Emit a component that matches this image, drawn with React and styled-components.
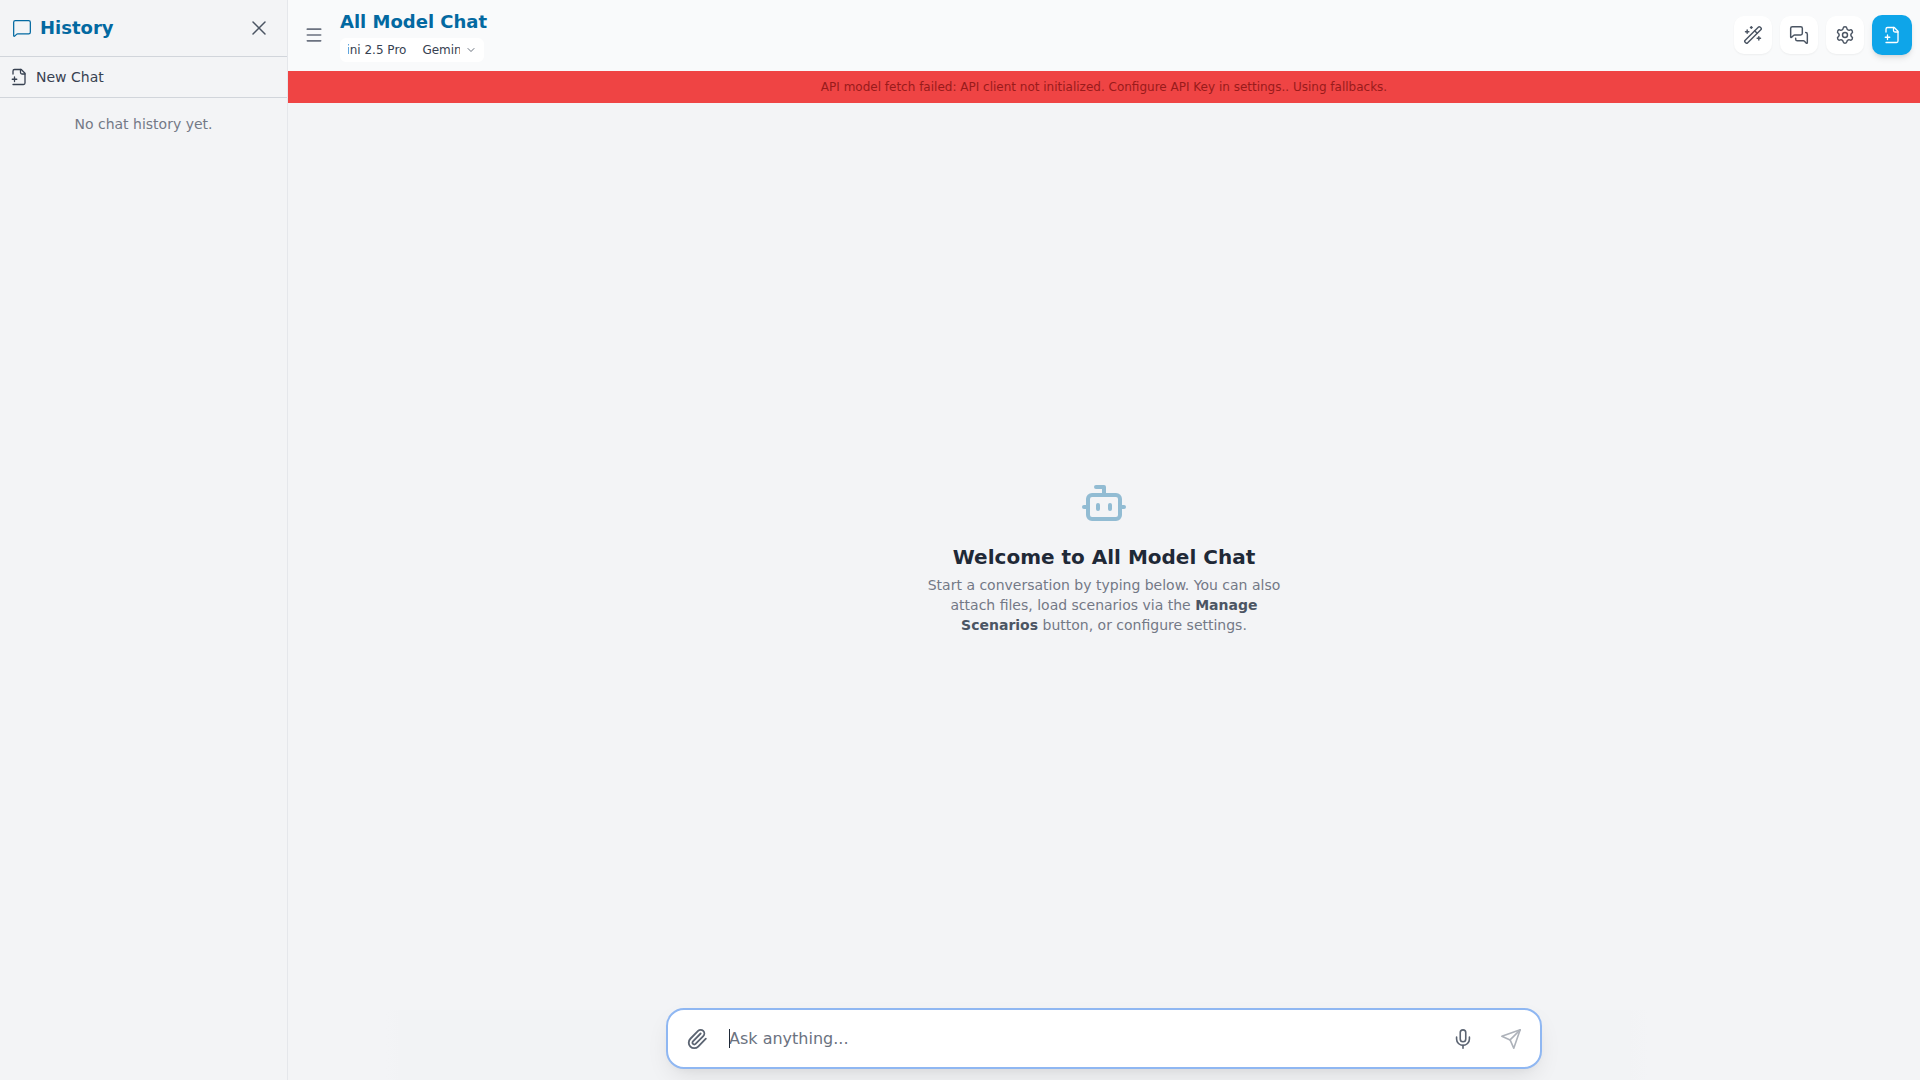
import React from 'react';
import styled, { createGlobalStyle } from 'styled-components';
import { MessageSquare, X, Menu, ChevronDown, WandSparkles, MessagesSquare, Settings, Bot, Paperclip, Mic } from 'lucide-react';

const Global = createGlobalStyle`
  html, body { margin: 0; padding: 0; height: 100%; }
  body { font-family: "DejaVu Sans", sans-serif; background: #f3f4f6; overflow: hidden; }
  #root { height: 100vh; }
  * { box-sizing: border-box; }
`;

const Glyph = styled.svg`
  flex: none;
  fill: none;
  stroke: currentColor;
  stroke-linecap: round;
  stroke-linejoin: round;
`;

const FileAdd = ({ size = 18, stroke = 1.75 }) => (
  <Glyph width={size} height={size} viewBox="0 0 24 24" strokeWidth={stroke}>
    <path d="M4 22h14a2 2 0 0 0 2-2V7l-5-5H6a2 2 0 0 0-2 2v4" />
    <path d="M14 2v4a2 2 0 0 0 2 2h4" />
    <path d="M3 15h6" />
    <path d="M6 12v6" />
  </Glyph>
);

const PaperPlane = ({ size = 22, stroke = 1.75 }) => (
  <Glyph width={size} height={size} viewBox="0 0 24 24" strokeWidth={stroke}>
    <path d="m22 2-7 20-4-9-9-4Z" />
    <path d="M22 2 11 13" />
  </Glyph>
);

const Shell = styled.div`
  display: flex;
  height: 1080px;
  background: #f3f4f6;
`;

const Sidebar = styled.aside`
  width: 288px;
  flex: none;
  display: flex;
  flex-direction: column;
  background: #f3f4f6;
  border-right: 1px solid #e5e7eb;
`;

const SideHead = styled.div`
  height: 57px;
  display: flex;
  align-items: center;
  justify-content: space-between;
  padding: 0 16px 0 12px;
  border-bottom: 1px solid #d1d5db;
`;

const SideTitle = styled.h2`
  margin: 0;
  display: flex;
  align-items: center;
  gap: 8px;
  font-size: 18px;
  line-height: 28px;
  font-weight: 700;
  color: #0369a1;
`;

const CloseButton = styled.button`
  border: 0;
  padding: 0;
  background: none;
  display: flex;
  color: #4b5563;
`;

const NewChat = styled.div`
  height: 41px;
  display: flex;
  align-items: center;
  gap: 8px;
  padding: 0 10px;
  font-size: 14px;
  color: #374151;
  border-bottom: 1px solid #d1d5db;
`;

const Empty = styled.p`
  margin: 16px 0 0;
  text-align: center;
  font-size: 14px;
  line-height: 20px;
  color: #737986;
`;

const Main = styled.main`
  flex: 1;
  min-width: 0;
  display: flex;
  flex-direction: column;
`;

const Header = styled.header`
  height: 71px;
  flex: none;
  display: flex;
  align-items: center;
  justify-content: space-between;
  padding: 0 8px 1px 16px;
  background: #f9fafb;
`;

const HeaderLeft = styled.div`
  display: flex;
  align-items: center;
  gap: 16px;
`;

const MenuButton = styled.button`
  border: 0;
  padding: 0;
  background: none;
  display: flex;
  color: #6b7280;
`;

const TitleBlock = styled.div`
  display: flex;
  flex-direction: column;
  gap: 2px;
`;

const AppTitle = styled.h1`
  margin: 0;
  font-size: 18px;
  line-height: 28px;
  font-weight: 700;
  color: #0369a1;
`;

const ModelPill = styled.button`
  width: 144px;
  height: 24px;
  border: 0;
  border-radius: 6px;
  background: #ffffff;
  display: flex;
  align-items: center;
  gap: 5px;
  padding: 0 7px 0 8px;
  font: inherit;
  font-size: 12px;
  color: #374151;
`;

const Marquee = styled.span`
  flex: 1;
  min-width: 0;
  overflow: hidden;
  white-space: nowrap;
  display: flex;
`;

const MarqueeTrack = styled.span`
  display: flex;
  gap: 16px;
  margin-left: -30px;
`;

const Actions = styled.div`
  display: flex;
  align-items: center;
  gap: 8px;
`;

const IconButton = styled.button`
  width: 38px;
  height: 38px;
  border: 0;
  padding: 0;
  border-radius: 10px;
  background: #ffffff;
  color: #4b5563;
  display: flex;
  align-items: center;
  justify-content: center;
  box-shadow: 0 1px 2px rgba(0, 0, 0, 0.05);
`;

const PrimaryButton = styled(IconButton)`
  width: 40px;
  height: 40px;
  background: #0ea5e9;
  color: #ffffff;
  box-shadow: 0 4px 6px -1px rgba(0, 0, 0, 0.1), 0 2px 4px -2px rgba(0, 0, 0, 0.1);
`;

const Banner = styled.div`
  height: 32px;
  flex: none;
  display: flex;
  align-items: center;
  justify-content: center;
  background: #ef4444;
  color: #991b1b;
  font-size: 12px;
`;

const Welcome = styled.section`
  flex: 1;
  min-height: 0;
  display: flex;
  flex-direction: column;
  align-items: center;
  justify-content: center;
  padding-top: 2px;
  text-align: center;
`;

const BotMark = styled.div`
  display: flex;
  color: #0369a1;
  opacity: 0.4;
  margin-bottom: 16px;
`;

const WelcomeTitle = styled.h2`
  margin: 0 0 4px;
  font-size: 20px;
  line-height: 28px;
  font-weight: 700;
  color: #1f2937;
`;

const WelcomeText = styled.p`
  margin: 0;
  width: 384px;
  font-size: 14px;
  line-height: 20px;
  color: #737986;
  strong { color: #4b5563; font-weight: 700; }
`;

const Footer = styled.footer`
  flex: none;
  display: flex;
  justify-content: center;
  padding: 0 0 11px;
  background: linear-gradient(90deg, transparent 98px, #f2f3f5 112px, #f2f3f5 1340px, transparent 1360px) no-repeat 0 2px;
`;

const InputBox = styled.div`
  width: 876px;
  height: 61px;
  display: flex;
  align-items: center;
  gap: 16px;
  padding: 0 13px;
  background: #ffffff;
  border: 2px solid #8fb7f2;
  border-radius: 18px;
  box-shadow: 0 10px 25px -5px rgba(0, 0, 0, 0.1), 0 4px 10px -6px rgba(0, 0, 0, 0.08);
`;

const Tool = styled.button`
  width: 32px;
  height: 32px;
  flex: none;
  border: 0;
  padding: 0;
  background: none;
  display: flex;
  align-items: center;
  justify-content: center;
  color: ${p => (p.$muted ? '#adb2ba' : '#5b6472')};
`;

const PromptField = styled.div`
  position: relative;
  flex: 1;
  min-width: 0;
  display: flex;
`;

const Prompt = styled.textarea`
  flex: 1;
  min-width: 0;
  height: 24px;
  border: 0;
  outline: 0;
  resize: none;
  padding: 0;
  background: none;
  font-family: inherit;
  font-size: 16px;
  line-height: 24px;
  color: #1f2937;
  caret-color: transparent;
  &::placeholder { color: #6b7280; opacity: 1; }
`;

const Caret = styled.span`
  position: absolute;
  left: 0;
  top: 2px;
  width: 1px;
  height: 19px;
  background: #1f2937;
`;

export default function App() {
  return (
    <>
      <Global />
      <Shell>
        <Sidebar>
          <SideHead>
            <SideTitle><MessageSquare size={20} strokeWidth={1.5} />History</SideTitle>
            <CloseButton aria-label="Close"><X size={24} strokeWidth={1.5} /></CloseButton>
          </SideHead>
          <NewChat><FileAdd size={18} stroke={1.75} />New Chat</NewChat>
          <Empty>No chat history yet.</Empty>
        </Sidebar>
        <Main>
          <Header>
            <HeaderLeft>
              <MenuButton aria-label="Menu"><Menu size={20} strokeWidth={2} /></MenuButton>
              <TitleBlock>
                <AppTitle>All Model Chat</AppTitle>
                <ModelPill>
                  <Marquee>
                    <MarqueeTrack><span>Gemini 2.5 Pro</span><span>Gemini 2.5 Pro</span></MarqueeTrack>
                  </Marquee>
                  <ChevronDown size={12} strokeWidth={1.5} />
                </ModelPill>
              </TitleBlock>
            </HeaderLeft>
            <Actions>
              <IconButton aria-label="Scenarios"><WandSparkles size={20} strokeWidth={1.75} /></IconButton>
              <IconButton aria-label="Messages"><MessagesSquare size={20} strokeWidth={1.75} /></IconButton>
              <IconButton aria-label="Settings"><Settings size={20} strokeWidth={1.75} /></IconButton>
              <PrimaryButton aria-label="New"><FileAdd size={18} stroke={1.75} /></PrimaryButton>
            </Actions>
          </Header>
          <Banner>API model fetch failed: API client not initialized. Configure API Key in settings.. Using fallbacks.</Banner>
          <Welcome>
            <BotMark><Bot size={48} strokeWidth={2} /></BotMark>
            <WelcomeTitle>Welcome to All Model Chat</WelcomeTitle>
            <WelcomeText>Start a conversation by typing below. You can also attach files, load scenarios via the <strong>Manage Scenarios</strong> button, or configure settings.</WelcomeText>
          </Welcome>
          <Footer>
            <InputBox>
              <Tool aria-label="Attach"><Paperclip size={22} strokeWidth={2} /></Tool>
              <PromptField>
                <Prompt rows={1} placeholder="Ask anything..." />
                <Caret />
              </PromptField>
              <Tool aria-label="Voice"><Mic size={22} strokeWidth={1.75} /></Tool>
              <Tool $muted aria-label="Send"><PaperPlane size={22} stroke={1.75} /></Tool>
            </InputBox>
          </Footer>
        </Main>
      </Shell>
    </>
  );
}
